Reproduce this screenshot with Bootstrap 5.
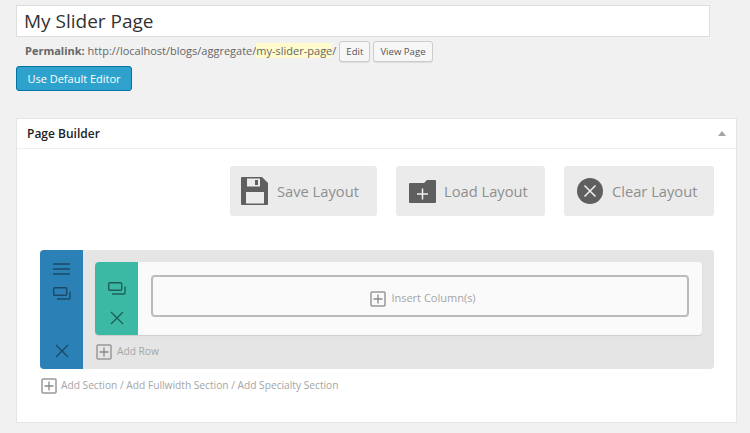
<!DOCTYPE html>
<html lang="en">
<head>
  <meta charset="UTF-8" />
  <meta name="viewport" content="width=device-width, initial-scale=1" />
  <title>My Slider Page</title>
  <link href="https://cdn.jsdelivr.net/npm/bootstrap@5.3.3/dist/css/bootstrap.min.css" rel="stylesheet" />
  <style>
    body { background: #f1f1f1; font-family: "Open Sans", sans-serif; color: #444; overflow: hidden; }
    .page-wrap { padding: 5px 0 0 16px; width: 737px; }
    .title-box { width: 694px; height: 32px; background: #fff; border: 1px solid #ddd; font-size: 19px; line-height: 30px; padding-left: 7px; color: #333; }
    .perma-row { height: 21px; margin-top: 4px; padding-left: 9px; font-size: 11px; color: #666; white-space: nowrap; }
    .perma-row strong { font-weight: 700; }
    .slug-mark { background: #fffbcc; }
    .small-btn { height: 21px; font-size: 9.6px; line-height: 18px; padding: 0 6px; margin-left: 3px; color: #555; background: #f7f7f7; border: 1px solid #ccc; border-radius: 3px; box-shadow: 0 1px 0 #ddd; }
    .editor-btn { display: block; width: 116px; height: 25px; margin-top: 4px; padding: 0; font-size: 11px; line-height: 23px; color: #fff; background: #2ea2cc; border: 1px solid #0074a2; border-radius: 3px; }
    .builder-box { height: 305px; margin-top: 27px; background: #fff; border: 1px solid #e5e5e5; border-radius: 0; }
    .builder-head { height: 30px; padding: 0 10px 0 10px; border-bottom: 1px solid #eee; font-size: 12px; font-weight: 600; color: #222; }
    .caret-up { width: 0; height: 0; border: 4px solid transparent; border-top: 0; border-bottom: 5px solid #a0a5aa; }
    .builder-body { padding: 17px 22px 0 23px; }
    .layout-btns { gap: 19px; height: 50px; }
    .layout-btn { height: 50px; background: #ebebeb; border-radius: 3px; font-size: 14.7px; color: #8f8f8f; gap: 8px; padding-left: 11px; }
    .w-save { width: 147px; }
    .w-load { width: 149px; padding-left: 13px; }
    .w-clear { width: 150px; padding-left: 13px; gap: 9px; }
    .section-box { height: 119px; margin-top: 34px; background: #e5e5e5; border-radius: 4px; overflow: hidden; }
    .section-side { width: 43px; background: #2b80b5; padding: 13px 0 11px; }
    .side-copy { margin-top: 12px; }
    .section-main { padding: 12px 12px 0; }
    .row-box { height: 73px; background: #fafafa; border-radius: 4px; box-shadow: 0 1px 1px #ccc; overflow: hidden; }
    .row-side { width: 43px; background: #3cb9a5; padding: 20px 0 9px; gap: 16px; }
    .col-slot { margin: 13px 13px 0; height: 42px; padding: 5px 0 0 6px; background: #fafafa; border: 2px solid #bbb; border-radius: 4px; gap: 5px; font-size: 11px; color: #a5a5a5; }
    .add-line { height: 16px; font-size: 10.2px; color: #a5a5a5; gap: 5px; white-space: nowrap; }
    .add-row { margin-top: 9px; margin-left: 1px; }
    .add-section { margin-top: 9px; margin-left: 1px; gap: 4px; }
    .plus-ico { flex: none; }
  </style>
</head>
<body>
  <div class="page-wrap">
    <div class="title-box">My Slider Page</div>
    <div class="perma-row d-flex align-items-center">
      <span><strong>Permalink:</strong> http://localhost/blogs/aggregate/<span class="slug-mark">my-slider-page</span>/</span>
      <button class="small-btn" type="button">Edit</button>
      <button class="small-btn" type="button">View Page</button>
    </div>
    <button class="editor-btn" type="button">Use Default Editor</button>

    <div class="card builder-box">
      <div class="builder-head d-flex justify-content-between align-items-center">
        <span>Page Builder</span>
        <span class="caret-up"></span>
      </div>
      <div class="builder-body">
        <div class="layout-btns d-flex justify-content-end">
          <div class="layout-btn w-save d-flex align-items-center">
            <svg width="28" height="28" viewBox="0 0 28 28"><path fill="#5f5f5f" d="M1 0h20l6 6v21a1 1 0 0 1-1 1H1a1 1 0 0 1-1-1V1a1 1 0 0 1 1-1z"/><path fill="#ebebeb" d="M6 1.500h13v8H6z"/><path fill="#5f5f5f" d="M14 3h3v5h-3z"/><path fill="#ebebeb" d="M5 15h18v11.500H5z"/></svg>
            <span>Save Layout</span>
          </div>
          <div class="layout-btn w-load d-flex align-items-center">
            <svg width="27" height="23" viewBox="0 0 27 23"><path fill="#5f5f5f" d="M1 3h14l3-3h8a1 1 0 0 1 1 1v21a1 1 0 0 1-1 1H1a1 1 0 0 1-1-1V4a1 1 0 0 1 1-1z"/><path stroke="#f1f1f1" stroke-width="1.500" d="M8 14h11M13.500 8.500v11"/></svg>
            <span>Load Layout</span>
          </div>
          <div class="layout-btn w-clear d-flex align-items-center">
            <svg width="26" height="26" viewBox="0 0 26 26"><circle cx="13" cy="13" r="13" fill="#5f5f5f"/><path stroke="#f1f1f1" stroke-width="1.500" d="M7.500 7.500l11 11M18.500 7.500l-11 11"/></svg>
            <span>Clear Layout</span>
          </div>
        </div>

        <div class="section-box d-flex">
          <div class="section-side d-flex flex-column align-items-center">
            <svg width="17" height="12" viewBox="0 0 17 12"><path stroke="#1a4a68" stroke-width="1.300" d="M0 1h17M0 6h17M0 11h17"/></svg>
            <svg class="side-copy" width="18" height="13" viewBox="0 0 18 13" fill="none" stroke="#1a4a68" stroke-width="1.400"><rect x=".7" y=".7" width="13" height="7.500" rx="1"/><path d="M17 4.500v6.500a1 1 0 0 1-1 1H4"/></svg>
            <svg class="mt-auto" width="14" height="14" viewBox="0 0 14 14"><path stroke="#1a4a68" stroke-width="1.400" d="M1 1l12 12M13 1L1 13"/></svg>
          </div>
          <div class="section-main flex-grow-1">
            <div class="row-box d-flex">
              <div class="row-side d-flex flex-column align-items-center">
                <svg width="18" height="13" viewBox="0 0 18 13" fill="none" stroke="#1f5f57" stroke-width="1.400"><rect x=".7" y=".7" width="13" height="7.500" rx="1"/><path d="M17 4.500v6.500a1 1 0 0 1-1 1H4"/></svg>
                <svg width="14" height="14" viewBox="0 0 14 14"><path stroke="#1f5f57" stroke-width="1.400" d="M1 1l12 12M13 1L1 13"/></svg>
              </div>
              <div class="col-slot flex-grow-1 d-flex align-items-center justify-content-center">
                <svg class="plus-ico" width="16" height="16" viewBox="0 0 16 16"><rect x="1" y="1" width="14" height="14" rx="1" fill="none" stroke="#999" stroke-width="1.500"/><path stroke="#888" stroke-width="1.300" d="M3.500 8h9M8 3.500v9"/></svg>
                <span>Insert Column(s)</span>
              </div>
            </div>
            <div class="add-line add-row d-flex align-items-center">
              <svg class="plus-ico" width="16" height="16" viewBox="0 0 16 16"><rect x="1" y="1" width="14" height="14" rx="1" fill="none" stroke="#999" stroke-width="1.500"/><path stroke="#888" stroke-width="1.300" d="M3.500 8h9M8 3.500v9"/></svg>
              <span>Add Row</span>
            </div>
          </div>
        </div>

        <div class="add-line add-section d-flex align-items-center">
          <svg class="plus-ico" width="16" height="16" viewBox="0 0 16 16"><rect x="1" y="1" width="14" height="14" rx="1" fill="none" stroke="#999" stroke-width="1.500"/><path stroke="#888" stroke-width="1.300" d="M3.500 8h9M8 3.500v9"/></svg>
          <span>Add Section / Add Fullwidth Section / Add Specialty Section</span>
        </div>
      </div>
    </div>
  </div>
  <script src="https://cdn.jsdelivr.net/npm/bootstrap@5.3.3/dist/js/bootstrap.bundle.min.js"></script>
</body>
</html>
